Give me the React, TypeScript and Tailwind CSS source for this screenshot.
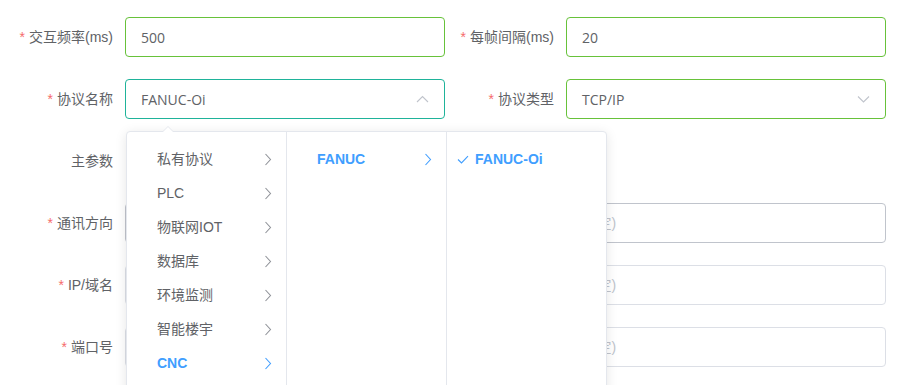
import React from "react";

const CJK = '"Liberation Sans", "Noto Sans CJK SC", sans-serif';
const VAL = '"Open Sans", "Noto Sans CJK SC", sans-serif';

function Label({ text, required, width }: { text: string; required?: boolean; width: string }) {
  return (
    <div className={`${width} flex h-[40px] shrink-0 items-center justify-end pr-3 text-[14px] text-[#606266]`}>
      {required && <span className="mr-1 text-[#f56c6c]">*</span>}
      {text}
    </div>
  );
}

function Chevron({ dir, color }: { dir: "up" | "down" | "right"; color: string }) {
  if (dir === "right")
    return (
      <svg width="8" height="13" viewBox="0 0 8 13" fill="none">
        <polyline points="1.5,1 6.5,6.5 1.5,12" stroke={color} strokeWidth="1.1" />
      </svg>
    );
  return (
    <svg width="13" height="8" viewBox="0 0 13 8" fill="none">
      {dir === "up" ? (
        <polyline points="1,7 6.5,1.5 12,7" stroke={color} strokeWidth="1.1" />
      ) : (
        <polyline points="1,1.5 6.5,7 12,1.5" stroke={color} strokeWidth="1.1" />
      )}
    </svg>
  );
}

function Field({ value, border, arrow, width = "w-[320px]", placeholder }: { value?: string; border: string; arrow?: "up" | "down"; width?: string; placeholder?: string }) {
  return (
    <div className={`${width} flex h-[40px] shrink-0 items-center justify-between overflow-hidden rounded-[4px] border bg-white px-[15px] ${border}`}>
      {value ? (
        <span className="text-[14px] text-[#606266]" style={{ fontFamily: VAL }}>{value}</span>
      ) : (
        <span className="whitespace-pre text-[14px] text-[#c0c4cc]">{placeholder}</span>
      )}
      {arrow && <Chevron dir={arrow} color="#c0c4cc" />}
    </div>
  );
}

const level1 = ["私有协议", "PLC", "物联网IOT", "数据库", "环境监测", "智能楼宇", "CNC"];

function Cascader() {
  return (
    <div className="absolute left-[126px] top-[131px] flex h-[270px] rounded-[4px] border border-[#e4e7ed] bg-white shadow-[0_2px_12px_0_rgba(0,0,0,0.1)]">
      <div className="absolute -top-[6px] left-[35px] h-0 w-0 border-x-[6px] border-b-[6px] border-x-transparent border-b-[#e4e7ed]" />
      <div className="absolute -top-[5px] left-[35px] h-0 w-0 border-x-[6px] border-b-[6px] border-x-transparent border-b-white" />
      <div className="w-[160px] border-r border-[#e4e7ed] pt-[10px]">
        {level1.map((t) => {
          const active = t === "CNC";
          return (
            <div key={t} className="flex h-[34px] items-center justify-between pl-[30px] pr-[14px]">
              <span className={`text-[14px] ${active ? "font-bold text-[#409eff]" : "text-[#606266]"}`}>{t}</span>
              <Chevron dir="right" color={active ? "#409eff" : "#909399"} />
            </div>
          );
        })}
      </div>
      <div className="w-[160px] border-r border-[#e4e7ed] pt-[10px]">
        <div className="flex h-[34px] items-center justify-between pl-[30px] pr-[14px]">
          <span className="text-[14px] font-bold text-[#409eff]">FANUC</span>
          <Chevron dir="right" color="#409eff" />
        </div>
      </div>
      <div className="w-[159px] pt-[10px]">
        <div className="flex h-[34px] items-center pl-[10px]">
          <svg width="12" height="9" viewBox="0 0 12 9" fill="none" className="mr-[6px]">
            <polyline points="1,4.5 4.5,8 11,1.2" stroke="#409eff" strokeWidth="1.1" />
          </svg>
          <span className="text-[14px] font-bold text-[#409eff]">FANUC-Oi</span>
        </div>
      </div>
    </div>
  );
}

export default function App() {
  return (
    <div className="relative h-[385px] w-[897px] overflow-hidden bg-white pt-[17px]" style={{ fontFamily: CJK }}>
      <div className="flex">
        <Label text="交互频率(ms)" required width="w-[125px]" />
        <Field value="500" border="border-[#67c23a]" />
        <Label text="每帧间隔(ms)" required width="w-[121px]" />
        <Field value="20" border="border-[#67c23a]" />
      </div>
      <div className="mt-[22px] flex">
        <Label text="协议名称" required width="w-[125px]" />
        <Field value="FANUC-Oi" border="border-[#1fb39a]" arrow="up" />
        <Label text="协议类型" required width="w-[121px]" />
        <Field value="TCP/IP" border="border-[#67c23a]" arrow="down" />
      </div>
      <div className="mt-[22px] flex">
        <Label text="主参数" width="w-[125px]" />
      </div>
      <div className="mt-[22px] flex">
        <Label text="通讯方向" required width="w-[125px]" />
        <Field border="border-[#c0c4cc]" width="w-[761px]" placeholder="请选择通讯的方向以及数据上报与指令下发的交互模式( 系统默认由平台确定)" />
      </div>
      <div className="mt-[22px] flex">
        <Label text="IP/域名" required width="w-[125px]" />
        <Field border="border-[#dcdfe6]" width="w-[761px]" placeholder="请输入设备的域名以及数据上报与指令下发的交互模式( 系统默认由平台确定)" />
      </div>
      <div className="mt-[22px] flex">
        <Label text="端口号" required width="w-[125px]" />
        <Field border="border-[#dcdfe6]" width="w-[761px]" placeholder="请输入设备端口号以及数据上报与指令下发的通讯模式( 系统默认由平台确定)" />
      </div>
      <Cascader />
    </div>
  );
}
